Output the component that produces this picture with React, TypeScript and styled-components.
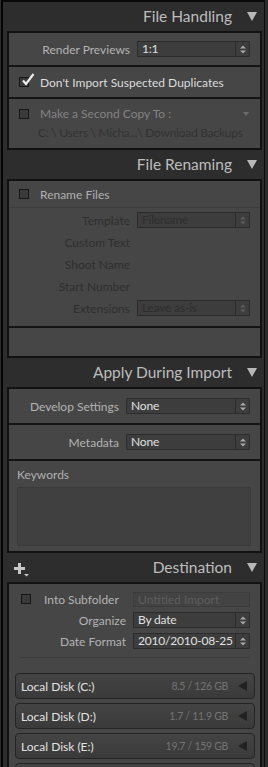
import React from 'react'
import styled, { createGlobalStyle } from 'styled-components'

const GlobalStyle = createGlobalStyle`
  html, body {
    margin: 0;
    padding: 0;
    background: #272727;
  }
  body {
    font-family: Lato, "Liberation Sans", sans-serif;
    -webkit-font-smoothing: antialiased;
  }
`

type Disk = { name: string, size: string }

// the last volume only peeks in at the bottom edge, so it carries no text
const disks: Disk[] = [
  { name: 'Local Disk (C:)', size: '8.5 / 126 GB' },
  { name: 'Local Disk (D:)', size: '1.7 / 11.9 GB' },
  { name: 'Local Disk (E:)', size: '19.7 / 159 GB' },
  { name: '', size: '' },
]

function Disclosure() {
  return (
    <svg width="10" height="9" viewBox="0 0 10 9">
      <path d="M0 0 L10 0 L5 9 Z" fill="#b8b8b8" />
    </svg>
  )
}

function PlusIcon() {
  return (
    <svg width="16" height="14" viewBox="0 0 16 14">
      <path d="M4 0 h3 v4 h4 v3 h-4 v4 h-3 v-4 h-4 v-3 h4 Z" fill="#c6c6c6" />
      <path d="M10 11 h5 l-2.5 2.5 Z" fill="#c6c6c6" />
    </svg>
  )
}

function Spinner({ dim }: { dim?: boolean }) {
  const c = dim ? '#5c5c5c' : '#a8a8a8'
  return (
    <SpinBox>
      <svg width="6" height="9" viewBox="0 0 6 9">
        <path d="M0 3.5 L3 0.5 L6 3.5 Z" fill={c} />
        <path d="M0 5.5 L3 8.5 L6 5.5 Z" fill={c} />
      </svg>
    </SpinBox>
  )
}

function Select({ value, dim }: { value: string, dim?: boolean }) {
  return (
    <SelectBox>
      <SelectValue $dim={dim}>{value}</SelectValue>
      <Spinner dim={dim} />
    </SelectBox>
  )
}

function Check({ checked }: { checked?: boolean }) {
  return (
    <CheckBox>
      {checked &&
        <CheckMark width="14" height="14" viewBox="0 0 14 14">
          <path d="M2 7.5 L5 11 L12.5 1" stroke="#ececec" strokeWidth="2.2" fill="none" />
        </CheckMark>
      }
    </CheckBox>
  )
}

function Header({ title, plus }: { title: string, plus?: boolean }) {
  return (
    <HeaderBar>
      {plus && <PlusSlot><PlusIcon /></PlusSlot>}
      <Title>{title}</Title>
      <Disclosure />
    </HeaderBar>
  )
}

export default function App() {
  return (
    <>
      <GlobalStyle />
      <Frame>
        <Shell>
          <Header title="File Handling" />
          <Box>
            <Row $h={32}>
              <FieldRow $lw={121}>
                <Label>Render Previews</Label>
                <Select value="1:1" />
              </FieldRow>
            </Row>
            <Sep />
            <Row $h={30}>
              <CheckLine>
                <Check checked />
                <CheckText $tone="bright">Don't Import Suspected Duplicates</CheckText>
              </CheckLine>
            </Row>
            <Sep />
            <CopyBlock>
              <CheckLine>
                <Check />
                <CheckText $tone="muted">Make a Second Copy To :</CheckText>
                <SmallArrow />
              </CheckLine>
              <PathText>C: \ Users \ Micha...\ Download Backups</PathText>
            </CopyBlock>
          </Box>

          <Header title="File Renaming" />
          <Box>
            <Row $h={26}>
              <CheckLine>
                <Check />
                <CheckText $tone="normal">Rename Files</CheckText>
              </CheckLine>
            </Row>
            <FaintSep />
            <FieldStack>
              <FieldRow $lw={121}>
                <Label $dim>Template</Label>
                <Select value="Filename" dim />
              </FieldRow>
              <FieldRow $lw={121}>
                <Label $dim>Custom Text</Label>
              </FieldRow>
              <FieldRow $lw={121}>
                <Label $dim>Shoot Name</Label>
              </FieldRow>
              <FieldRow $lw={121}>
                <Label $dim>Start Number</Label>
              </FieldRow>
              <FieldRow $lw={121}>
                <Label $dim>Extensions</Label>
                <Select value="Leave as-is" dim />
              </FieldRow>
            </FieldStack>
            <Sep />
            <EmptyArea />
          </Box>

          <Header title="Apply During Import" />
          <Box>
            <Row $h={34}>
              <FieldRow $lw={110}>
                <Label>Develop Settings</Label>
                <Select value="None" />
              </FieldRow>
            </Row>
            <Sep />
            <Row $h={34}>
              <FieldRow $lw={110}>
                <Label>Metadata</Label>
                <Select value="None" />
              </FieldRow>
            </Row>
            <Sep />
            <KeywordBlock>
              <KeywordLabel>Keywords</KeywordLabel>
              <KeywordArea />
            </KeywordBlock>
          </Box>

          <Header title="Destination" plus />
          <Box $grow>
            <DestFields>
              <FieldRow $lw={117}>
                <SubfolderLabel>
                  <Check />
                  <Label>Into Subfolder</Label>
                </SubfolderLabel>
                <TextField>Untitled Import</TextField>
              </FieldRow>
              <FieldRow $lw={117}>
                <Label>Organize</Label>
                <Select value="By date" />
              </FieldRow>
              <FieldRow $lw={117}>
                <Label>Date Format</Label>
                <Select value="2010/2010-08-25" />
              </FieldRow>
            </DestFields>
            <ThinRule />
            <DiskList>
              {disks.map((d, i) => (
                <DiskRow key={i}>
                  {d.name && <DiskName>{d.name}</DiskName>}
                  {d.size && <DiskSize>{d.size}</DiskSize>}
                  <DiskArrow />
                </DiskRow>
              ))}
            </DiskList>
          </Box>
        </Shell>
      </Frame>
    </>
  )
}

const Frame = styled.div`
  width: 268px;
  height: 767px;
  overflow: hidden;
  padding-left: 1px;
  box-sizing: border-box;
  background: #2b2b2b;
  display: flex;
`

const Shell = styled.div`
  width: 264px;
  height: 100%;
  box-sizing: border-box;
  border-left: 2px solid #050505;
  border-right: 1px solid #0e0e0e;
  border-top: 2px solid #0a0a0a;
  background: #2d2d2d;
  display: flex;
  flex-direction: column;
`

const HeaderBar = styled.div`
  height: 29px;
  flex-shrink: 0;
  display: flex;
  align-items: center;
  justify-content: flex-end;
  gap: 15px;
  padding-right: 7px;
`

const PlusSlot = styled.div`
  margin-left: 11px;
  margin-right: auto;
  display: flex;
  padding-top: 4px;
`

const Title = styled.div`
  font-size: 15.5px;
  font-weight: 400;
  color: #bdbdbd;
  margin-top: -1px;
`

const Box = styled.div<{ $grow?: boolean }>`
  margin: 0 2px 0 4px;
  border: 2px solid #121212;
  background: #464646;
  flex-shrink: 0;
  ${p => p.$grow && 'flex: 1; border-bottom: none;'}
`

const Row = styled.div<{ $h: number }>`
  height: ${p => p.$h}px;
  display: flex;
  align-items: center;
`

const Sep = styled.div`
  height: 2px;
  background: #141414;
`

const FaintSep = styled.div`
  height: 1px;
  background: #3d3d3d;
`

const FieldRow = styled.div<{ $lw: number }>`
  width: 100%;
  height: 20px;
  display: grid;
  grid-template-columns: ${p => p.$lw}px 1fr;
  column-gap: 7px;
  align-items: center;
  padding-right: 10px;
  box-sizing: border-box;
`

const Label = styled.div<{ $dim?: boolean }>`
  text-align: right;
  font-size: 12px;
  color: ${p => p.$dim ? '#2f2f2f' : '#b3b3b3'};
  white-space: nowrap;
`

const SelectBox = styled.div`
  height: 16px;
  box-sizing: border-box;
  border: 1px solid #2c2c2c;
  background: #3d3d3d;
  display: flex;
  align-items: stretch;
`

const SelectValue = styled.div<{ $dim?: boolean }>`
  flex: 1;
  padding-left: 4px;
  font-size: 12px;
  line-height: 14px;
  letter-spacing: -0.2px;
  color: ${p => p.$dim ? '#2e2e2e' : '#e0e0e0'};
  white-space: nowrap;
  overflow: hidden;
`

const SpinBox = styled.div`
  width: 13px;
  flex-shrink: 0;
  border-left: 1px solid #2c2c2c;
  display: flex;
  align-items: center;
  justify-content: center;
`

const CheckLine = styled.div`
  display: flex;
  align-items: center;
  width: 100%;
  padding-left: 10px;
  padding-right: 11px;
  box-sizing: border-box;
`

const CheckBox = styled.div`
  position: relative;
  width: 10px;
  height: 10px;
  box-sizing: border-box;
  border: 1px solid #161616;
  background: #3a3a3a;
  flex-shrink: 0;
`

const CheckMark = styled.svg`
  position: absolute;
  left: 1px;
  top: -5px;
`

const CheckText = styled.div<{ $tone: 'bright' | 'normal' | 'muted' }>`
  margin-left: 11px;
  font-size: 12px;
  white-space: nowrap;
  color: ${p => p.$tone === 'bright' ? '#dcdcdc' : p.$tone === 'normal' ? '#b0b0b0' : '#838383'};
`

const SmallArrow = styled.div`
  margin-left: auto;
  width: 0;
  height: 0;
  border-left: 3.5px solid transparent;
  border-right: 3.5px solid transparent;
  border-top: 4px solid #6c6c6c;
`

const CopyBlock = styled.div`
  height: 49px;
  padding-top: 7px;
  box-sizing: border-box;
  display: flex;
  flex-direction: column;
  gap: 5px;
`

const PathText = styled.div`
  padding-left: 29px;
  font-size: 12px;
  line-height: 14px;
  letter-spacing: -0.25px;
  color: #333333;
  white-space: nowrap;
`

const FieldStack = styled.div`
  padding: 2px 0 8px;
  display: flex;
  flex-direction: column;
  gap: 2px;
`

const EmptyArea = styled.div`
  height: 28px;
`

const KeywordBlock = styled.div`
  height: 90px;
  padding: 7px 9px 5px 8px;
  box-sizing: border-box;
  display: flex;
  flex-direction: column;
  gap: 5px;
`

const KeywordLabel = styled.div`
  font-size: 12px;
  line-height: 14px;
  color: #b0b0b0;
`

const KeywordArea = styled.div`
  flex: 1;
  border: 1px solid #3a3a3a;
  background: #404040;
`

const DestFields = styled.div`
  padding-top: 5px;
  display: flex;
  flex-direction: column;
  gap: 1px;
`

const SubfolderLabel = styled.div`
  display: flex;
  align-items: center;
  padding-left: 12px;
  gap: 13px;
`

const TextField = styled.div`
  height: 15px;
  box-sizing: border-box;
  border: 1px solid #3c3c3c;
  background: #434343;
  padding-left: 4px;
  font-size: 12px;
  line-height: 13px;
  color: #5e5e5e;
`

const ThinRule = styled.div`
  margin: 6px 10px 0 11px;
  height: 1px;
  background: #3d3d3d;
`

const DiskList = styled.div`
  margin: 15px 5px 0 6px;
  display: flex;
  flex-direction: column;
  gap: 4px;
`

const DiskRow = styled.div`
  height: 26px;
  flex-shrink: 0;
  box-sizing: border-box;
  border: 1px solid #242424;
  border-radius: 4px;
  background: linear-gradient(#444444, #3a3a3a);
  display: flex;
  align-items: center;
  padding: 0 7px 0 5px;
`

const DiskName = styled.div`
  font-size: 12px;
  color: #e2e2e2;
`

const DiskSize = styled.div`
  margin-left: auto;
  font-size: 10.5px;
  color: #747474;
  letter-spacing: -0.3px;
`

const DiskArrow = styled.div`
  margin-left: auto;
  width: 0;
  height: 0;
  border-top: 5px solid transparent;
  border-bottom: 5px solid transparent;
  border-right: 9px solid #222222;
  ${DiskSize} + & {
    margin-left: 10px;
  }
`
